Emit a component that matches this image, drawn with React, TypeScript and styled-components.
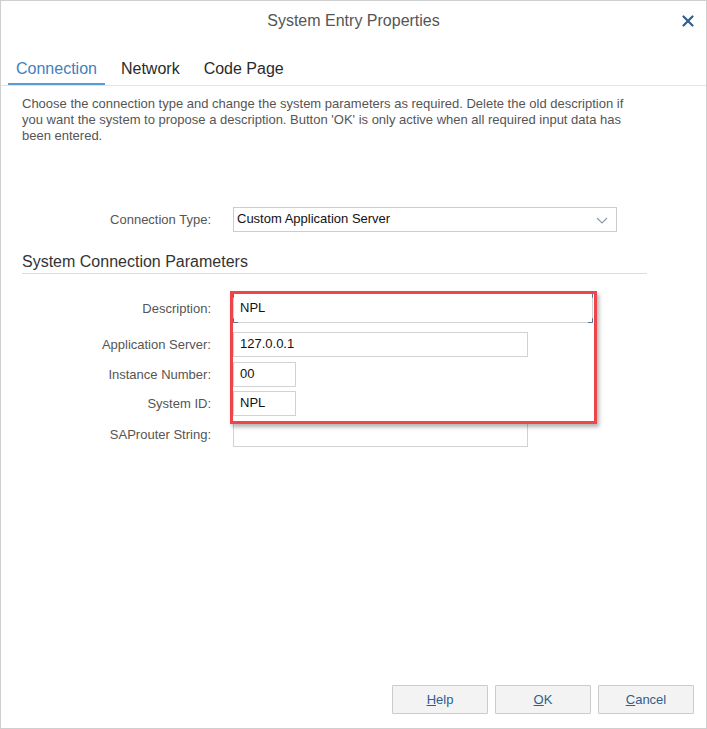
import React from "react";
import styled, { createGlobalStyle } from "styled-components";

const GlobalStyle = createGlobalStyle`
  html, body {
    margin: 0;
    padding: 0;
    background: #fff;
  }
  body {
    font-family: "Liberation Sans", Arial, sans-serif;
  }
`;

const Window = styled.div`
  width: 707px;
  height: 729px;
  box-sizing: border-box;
  border: 1px solid #cfcfcf;
  display: flex;
  flex-direction: column;
  background: #fff;
`;

const TitleBar = styled.header`
  height: 40px;
  display: grid;
  grid-template-columns: 1fr auto 1fr;
  align-items: center;
`;

const Title = styled.h1`
  grid-column: 2;
  margin: 0;
  font-size: 16px;
  font-weight: normal;
  color: #555;
`;

const CloseButton = styled.button`
  justify-self: end;
  margin-right: 12px;
  padding: 0;
  border: none;
  background: none;
  display: flex;
  cursor: pointer;
`;

const TabBar = styled.nav`
  height: 44px;
  display: flex;
  align-items: flex-end;
  gap: 8px;
  padding-left: 7px;
  border-bottom: 1px solid #dde6ee;
`;

const Tab = styled.div<{ $active?: boolean }>`
  padding: 0 8px 5px;
  font-size: 16px;
  line-height: 18px;
  color: ${(p) => (p.$active ? "#3f80c0" : "#2b2b2b")};
  border-bottom: 2px solid ${(p) => (p.$active ? "#5b9bd5" : "transparent")};
`;

const Content = styled.main`
  flex: 1;
  padding: 10px 21px 0;
`;

const Intro = styled.p`
  margin: 0;
  font-size: 13px;
  line-height: 16px;
  color: #555;
  max-width: 620px;
`;

const Row = styled.div<{ $top?: number }>`
  display: grid;
  grid-template-columns: 189px auto;
  column-gap: 22px;
  align-items: center;
  margin-top: ${(p) => p.$top ?? 0}px;
`;

const Label = styled.label`
  text-align: right;
  font-size: 13px;
  color: #555;
`;

const Select = styled.div`
  width: 384px;
  height: 25px;
  box-sizing: border-box;
  border: 1px solid #cccccc;
  display: flex;
  align-items: flex-start;
  justify-content: space-between;
  padding: 3px 8px 0 3px;
  font-size: 13px;
  color: #111;
`;

const Chevron = styled.svg`
  margin-top: 6px;
`;

const SectionTitle = styled.h2`
  margin: 21px 0 0;
  width: 625px;
  padding-bottom: 2px;
  border-bottom: 1px solid #dcdcdc;
  font-size: 16px;
  line-height: 18px;
  font-weight: normal;
  color: #333;
`;

const Fields = styled.div`
  position: relative;
  margin-top: 19px;
`;

const Input = styled.div<{ $width: number; $height?: number }>`
  position: relative;
  width: ${(p) => p.$width}px;
  height: ${(p) => p.$height ?? 25}px;
  box-sizing: border-box;
  border: 1px solid #d2d2d2;
  padding: ${(p) => (p.$height ? 6 : 3)}px 6px 0;
  font-size: 13px;
  color: #111;
  background: #fff;
`;

const Corners = styled.svg`
  position: absolute;
  inset: -1px;
  width: calc(100% + 2px);
  height: calc(100% + 2px);
`;

const Highlight = styled.div`
  position: absolute;
  left: 208px;
  top: -2px;
  width: 367px;
  height: 133px;
  box-sizing: border-box;
  border: 3px solid #ef4448;
  box-shadow: 2px 3px 4px rgba(0, 0, 0, 0.3);
  pointer-events: none;
`;

const Footer = styled.footer`
  display: flex;
  justify-content: flex-end;
  gap: 7px;
  padding: 0 12px 14px;
`;

const Button = styled.button`
  width: 96px;
  height: 29px;
  box-sizing: border-box;
  border: 1px solid #cbcbcb;
  border-radius: 1px;
  background: #f3f3f3;
  color: #2f5f8e;
  font-family: inherit;
  font-size: 13px;
  padding: 0;
  cursor: pointer;

  u {
    text-decoration: underline;
  }
`;

const fields = [
  { label: "Application Server:", value: "127.0.0.1", width: 295, top: 9 },
  { label: "Instance Number:", value: "00", width: 63, top: 5 },
  { label: "System ID:", value: "NPL", width: 63, top: 4 },
  { label: "SAProuter String:", value: "", width: 295, top: 6 },
];

export default function App() {
  return (
    <>
      <GlobalStyle />
      <Window>
        <TitleBar>
          <Title>System Entry Properties</Title>
          <CloseButton aria-label="Close">
            <svg width="12" height="12" viewBox="0 0 12 12">
              <path
                d="M1.5 1.5 L10.5 10.5 M10.5 1.5 L1.5 10.5"
                stroke="#2f5f8e"
                strokeWidth="2.2"
                strokeLinecap="round"
              />
            </svg>
          </CloseButton>
        </TitleBar>

        <TabBar>
          <Tab $active>Connection</Tab>
          <Tab>Network</Tab>
          <Tab>Code Page</Tab>
        </TabBar>

        <Content>
          <Intro>
            Choose the connection type and change the system parameters as
            required. Delete the old description if you want the system to
            propose a description. Button 'OK' is only active when all required
            input data has been entered.
          </Intro>

          <Row $top={63}>
            <Label>Connection Type:</Label>
            <Select>
              <span>Custom Application Server</span>
              <Chevron width="12" height="7" viewBox="0 0 12 7">
                <path d="M1 1 L6 6 L11 1" fill="none" stroke="#8c9aa8" strokeWidth="1.1" />
              </Chevron>
            </Select>
          </Row>

          <SectionTitle>System Connection Parameters</SectionTitle>

          <Fields>
            <Row>
              <Label>Description:</Label>
              <Input $width={360} $height={30}>
                NPL
                <Corners viewBox="0 0 362 32" preserveAspectRatio="none">
                  <path
                    d="M0.5 5 V0.5 H5 M357 0.5 H361.5 V5 M361.5 27 V31.5 H357 M5 31.5 H0.5 V27"
                    fill="none"
                    stroke="#4d6f91"
                    strokeWidth="1"
                  />
                </Corners>
              </Input>
            </Row>
            {fields.map((f) => (
              <Row key={f.label} $top={f.top}>
                <Label>{f.label}</Label>
                <Input $width={f.width}>{f.value}</Input>
              </Row>
            ))}
            <Highlight />
          </Fields>
        </Content>

        <Footer>
          <Button>
            <u>H</u>elp
          </Button>
          <Button>
            <u>O</u>K
          </Button>
          <Button>
            <u>C</u>ancel
          </Button>
        </Footer>
      </Window>
    </>
  );
}
